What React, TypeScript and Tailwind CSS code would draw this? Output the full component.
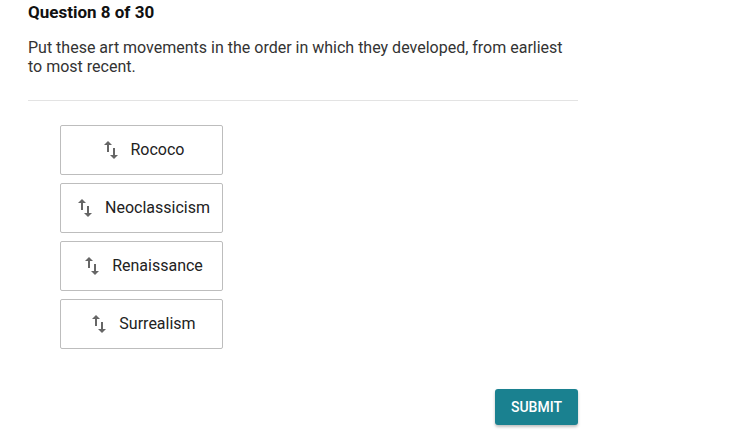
const items = ["Rococo", "Neoclassicism", "Renaissance", "Surrealism"];

function SwapIcon() {
  return (
    <svg width="24" height="24" viewBox="0 0 24 24" fill="#666">
      <path d="M16 17.01V10h-2v7.01h-3L15 21l4-3.99h-3zM9 3L5 6.99h3V14h2V6.99h3L9 3z" />
    </svg>
  );
}

export default function App() {
  return (
    <div className="w-[730px] h-[445px] bg-white font-['Roboto',sans-serif] text-[#222]">
      <div className="w-[550px] ml-[28px] flex flex-col">
        <h1 className="text-[17px] leading-[24px] font-bold text-[#111]">Question 8 of 30</h1>
        <p className="mt-[14px] text-[16px] leading-[19px] text-[#333]">
          Put these art movements in the order in which they developed, from earliest to most recent.
        </p>
        <div className="mt-[24px] border-t border-[#e3e3e3]" />
        <div className="mt-[24px] ml-[32px] flex flex-col gap-[8px]">
          {items.map((item) => (
            <div
              key={item}
              className="w-[163px] h-[50px] border border-[#bdbdbd] rounded-[2px] flex items-center justify-center gap-[8px] text-[16px]"
            >
              <SwapIcon />
              <span>{item}</span>
            </div>
          ))}
        </div>
        <div className="mt-[40px] flex justify-end">
          <button className="w-[83px] h-[36px] rounded-[3px] bg-[#1a8190] text-white text-[14px] font-medium shadow-[0_2px_3px_rgba(0,0,0,0.25)]">
            SUBMIT
          </button>
        </div>
      </div>
    </div>
  );
}
